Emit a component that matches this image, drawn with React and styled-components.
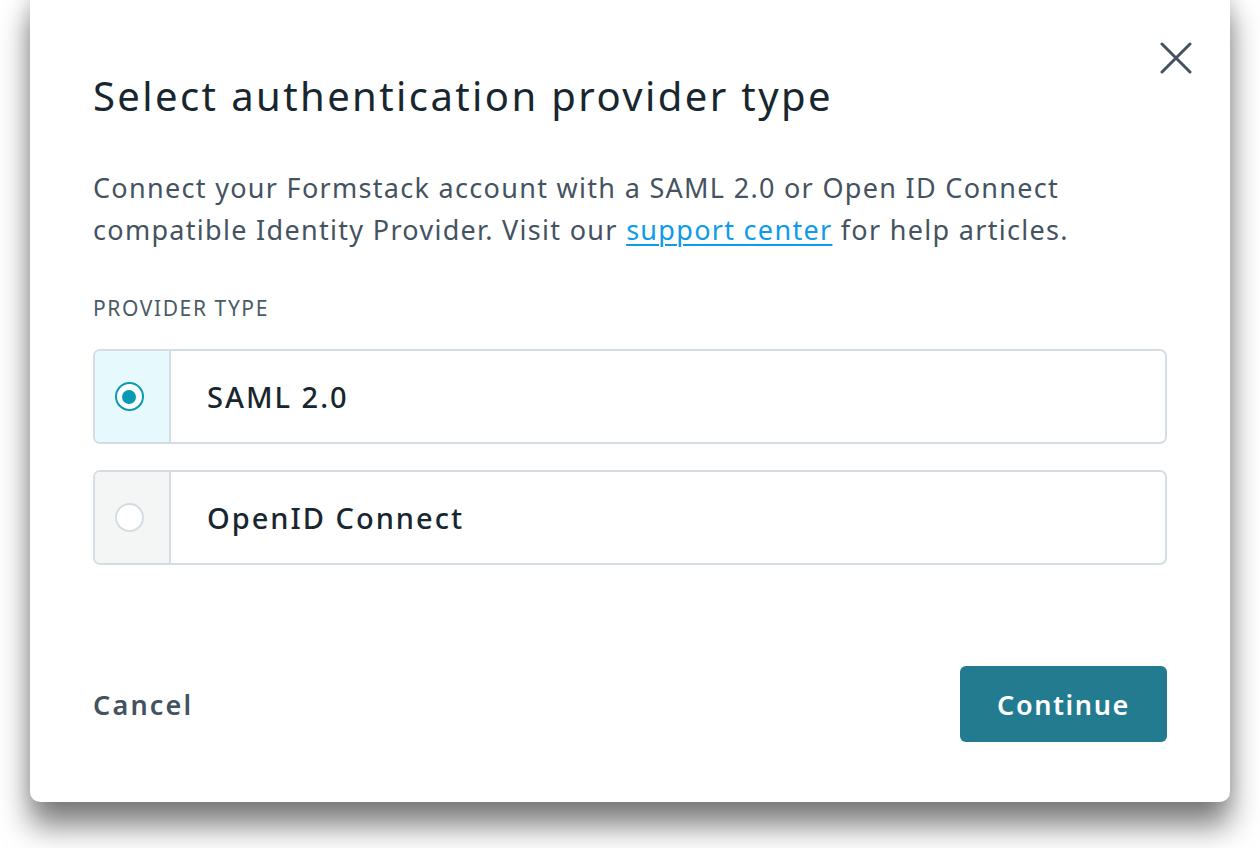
import { useState } from 'react';
import styled, { createGlobalStyle } from 'styled-components';

const GlobalStyle = createGlobalStyle`
    html, body {
        margin: 0;
        padding: 0;
        background: #fff;
        font-family: "Noto Sans", "Open Sans", sans-serif;
        overflow: hidden;
    }
`

const options = [
    { id: 'saml', label: 'SAML 2.0' },
    { id: 'oidc', label: 'OpenID Connect' },
]

export default function App() {
    const [selected, setSelected] = useState('saml');

    return (
        <>
            <GlobalStyle />
            <Page>
                <Modal>
                    <Header>
                        <Title>Select authentication provider type</Title>
                        <Close aria-label='Close'>
                            <svg width='32' height='32' viewBox='0 0 32 32' fill='none'>
                                <path d='M2 2L30 30M30 2L2 30' stroke='#43525e' strokeWidth='3' strokeLinecap='round' />
                            </svg>
                        </Close>
                    </Header>
                    <Description>
                        Connect your Formstack account with a SAML 2.0 or Open ID Connect compatible Identity Provider. Visit our <a href='#'>support center</a> for help articles.
                    </Description>
                    <Label>Provider type</Label>
                    <Options>
                        {options.map(o => (
                            <Option key={o.id} onClick={() => setSelected(o.id)}>
                                <RadioCell checked={selected === o.id}>
                                    <Radio checked={selected === o.id} />
                                </RadioCell>
                                <OptionLabel>{o.label}</OptionLabel>
                            </Option>
                        ))}
                    </Options>
                    <Footer>
                        <Cancel>Cancel</Cancel>
                        <Continue>Continue</Continue>
                    </Footer>
                </Modal>
            </Page>
        </>
    )
}

const Page = styled.div`
    width: 1260px;
    height: 860px;
    box-sizing: border-box;
    padding: 0 30px;
`
const Modal = styled.div`
    margin-top: -12px;
    height: 814px;
    box-sizing: border-box;
    background: #fff;
    border-radius: 10px;
    padding: 50px 63px 0 63px;
    display: flex;
    flex-direction: column;
    box-shadow: 0 24px 30px rgba(0, 0, 0, 0.5), 0 0 18px rgba(0, 0, 0, 0.12);
`
const Header = styled.div`
    display: flex;
    justify-content: space-between;
    align-items: flex-start;
`
const Title = styled.h1`
    margin: 32px 0 0 0;
    font-size: 40px;
    line-height: 52px;
    font-weight: 400;
    color: #17262f;
    letter-spacing: 2.4px;
`
const Close = styled.button`
    background: transparent;
    border: none;
    padding: 0;
    margin: 4px -25px 0 0;
    width: 32px;
    height: 32px;
    cursor: pointer;
`
const Description = styled.p`
    margin: 45px 0 0 0;
    font-size: 27px;
    line-height: 42px;
    letter-spacing: 1.3px;
    color: #44535f;
    a {
        color: #0d9bea;
        text-decoration: underline;
        text-underline-offset: 4px;
        text-decoration-thickness: 2px;
    }
`
const Label = styled.div`
    margin-top: 42px;
    font-size: 21px;
    line-height: 30px;
    letter-spacing: 1.6px;
    text-transform: uppercase;
    color: #4a5a66;
`
const Options = styled.div`
    margin-top: 26px;
    display: flex;
    flex-direction: column;
    gap: 26px;
`
const Option = styled.div`
    display: flex;
    height: 95px;
    box-sizing: border-box;
    border: 2px solid #d5dde2;
    border-radius: 7px;
    overflow: hidden;
    cursor: pointer;
`
const RadioCell = styled.div`
    width: 76px;
    flex-shrink: 0;
    box-sizing: border-box;
    padding-right: 6px;
    display: flex;
    align-items: center;
    justify-content: center;
    border-right: 2px solid #d5dde2;
    background: ${props => props.checked ? '#e6f9fd' : '#f4f6f6'};
`
const Radio = styled.span`
    width: 29px;
    height: 29px;
    box-sizing: border-box;
    border-radius: 50%;
    border: 2.5px solid ${props => props.checked ? '#0a9bb4' : '#d5dde2'};
    background: #fff;
    display: flex;
    align-items: center;
    justify-content: center;
    &::after {
        content: '';
        width: 14px;
        height: 14px;
        border-radius: 50%;
        background: #0a9bb4;
        display: ${props => props.checked ? 'block' : 'none'};
    }
`
const OptionLabel = styled.div`
    display: flex;
    align-items: center;
    padding-left: 36px;
    font-size: 29px;
    font-weight: 500;
    letter-spacing: 2px;
    color: #17262f;
`
const Footer = styled.div`
    margin-top: 101px;
    display: flex;
    justify-content: space-between;
    align-items: center;
`
const Cancel = styled.button`
    background: transparent;
    border: none;
    padding: 0;
    font-family: inherit;
    font-size: 27px;
    font-weight: 600;
    letter-spacing: 2.2px;
    color: #43525e;
    cursor: pointer;
`
const Continue = styled.button`
    width: 207px;
    height: 76px;
    border: none;
    border-radius: 6px;
    background: #227b8f;
    color: #fff;
    font-family: inherit;
    font-size: 27px;
    font-weight: 600;
    letter-spacing: 1.6px;
    cursor: pointer;
`
